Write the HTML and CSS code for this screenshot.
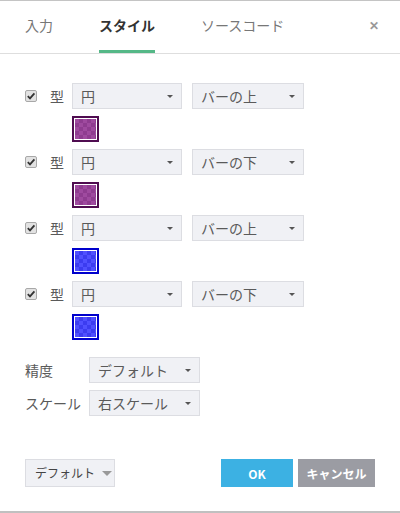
FILE: index.html
```html
<!DOCTYPE html>
<html lang="ja">
<head>
    <meta charset="UTF-8">
    <meta name="viewport" content="width=device-width, initial-scale=1.0">
    <title>スタイル</title>
    <link rel="stylesheet" href="styles.css">
</head>
<body>
    <div class="dialog">
        <div class="tabs">
            <div class="tab">入力</div>
            <div class="tab active">スタイル</div>
            <div class="tab">ソースコード</div>
            <div class="close">&#x2715;</div>
        </div>

        <div class="content">
            <div class="plot">
                <div class="row">
                    <span class="check"><svg width="12" height="12" viewBox="0 0 12 12"><rect x="0.5" y="0.5" width="11" height="11" rx="1.5" fill="#e2e2e2" stroke="#a8a8a8"/><path d="M2.8 6.2 L5 8.4 L9.4 3.4" fill="none" stroke="#333" stroke-width="1.8"/></svg></span>
                    <span class="label">型</span>
                    <div class="select wide">円</div>
                    <div class="select wide2">バーの上</div>
                </div>
                <div class="swatch purple"></div>
            </div>
            <div class="plot">
                <div class="row">
                    <span class="check"><svg width="12" height="12" viewBox="0 0 12 12"><rect x="0.5" y="0.5" width="11" height="11" rx="1.5" fill="#e2e2e2" stroke="#a8a8a8"/><path d="M2.8 6.2 L5 8.4 L9.4 3.4" fill="none" stroke="#333" stroke-width="1.8"/></svg></span>
                    <span class="label">型</span>
                    <div class="select wide">円</div>
                    <div class="select wide2">バーの下</div>
                </div>
                <div class="swatch purple"></div>
            </div>
            <div class="plot">
                <div class="row">
                    <span class="check"><svg width="12" height="12" viewBox="0 0 12 12"><rect x="0.5" y="0.5" width="11" height="11" rx="1.5" fill="#e2e2e2" stroke="#a8a8a8"/><path d="M2.8 6.2 L5 8.4 L9.4 3.4" fill="none" stroke="#333" stroke-width="1.8"/></svg></span>
                    <span class="label">型</span>
                    <div class="select wide">円</div>
                    <div class="select wide2">バーの上</div>
                </div>
                <div class="swatch blue"></div>
            </div>
            <div class="plot">
                <div class="row">
                    <span class="check"><svg width="12" height="12" viewBox="0 0 12 12"><rect x="0.5" y="0.5" width="11" height="11" rx="1.5" fill="#e2e2e2" stroke="#a8a8a8"/><path d="M2.8 6.2 L5 8.4 L9.4 3.4" fill="none" stroke="#333" stroke-width="1.8"/></svg></span>
                    <span class="label">型</span>
                    <div class="select wide">円</div>
                    <div class="select wide2">バーの下</div>
                </div>
                <div class="swatch blue"></div>
            </div>

            <div class="options">
                <div class="row">
                    <span class="opt-label">精度</span>
                    <div class="select opt">デフォルト</div>
                </div>
                <div class="row">
                    <span class="opt-label">スケール</span>
                    <div class="select opt">右スケール</div>
                </div>
            </div>
        </div>

        <div class="footer">
            <div class="defaults">デフォルト<span class="caret"></span></div>
            <div class="buttons">
                <button class="btn ok">OK</button>
                <button class="btn cancel">キャンセル</button>
            </div>
        </div>
    </div>
</body>
</html>
```

FILE: styles.css
```css
body {
    margin: 0;
    font-family: "Noto Sans CJK JP", "Noto Sans", sans-serif;
    color: #5a5a5a;
    background: #fff;
}
.dialog {
    width: 400px;
    height: 513px;
    box-sizing: border-box;
    border-top: 1px solid #c4c4c4;
    border-bottom: 2px solid #c0c0c0;
    display: flex;
    flex-direction: column;
}
.tabs {
    height: 52px;
    border-bottom: 1px solid #dedede;
    display: flex;
    padding-left: 25px;
    padding-right: 21px;
}
.tab {
    font-size: 14px;
    color: #777;
    line-height: 49px;
    height: 49px;
    margin-right: 46px;
    border-bottom: 3px solid transparent;
}
.tab.active {
    color: #333;
    font-weight: bold;
    border-bottom-color: #55b887;
}
.close {
    margin-left: auto;
    font-size: 12px;
    color: #999;
    line-height: 48px;
    font-weight: bold;
}
.content {
    padding: 29px 25px 0;
}
.row {
    display: flex;
    align-items: center;
    height: 26px;
}
.check {
    width: 12px;
    height: 12px;
    display: flex;
    margin-right: 13px;
}
.label {
    font-size: 14px;
    width: 22px;
}
.select {
    height: 26px;
    box-sizing: border-box;
    background: #f0f1f5;
    border: 1px solid #dcdde2;
    font-size: 14px;
    color: #5a5a5a;
    line-height: 24px;
    padding-left: 8px;
    position: relative;
}
.select::after {
    content: "";
    position: absolute;
    right: 8px;
    top: 11px;
    border-left: 3px solid transparent;
    border-right: 3px solid transparent;
    border-top: 3px solid #555;
}
.select.wide {
    width: 110px;
    margin-right: 10px;
}
.select.wide2 {
    width: 112px;
}
.swatch {
    width: 27px;
    height: 26px;
    box-sizing: border-box;
    margin: 7px 0 7px 47px;
    border: 2px solid;
    box-shadow: inset 0 0 0 1px #fff;
    background-size: 8px 8px;
}
.swatch.purple {
    border-color: #4f0c50;
    background-color: #9f4a9f;
    background-image: linear-gradient(45deg, #8f3c90 25%, transparent 25%, transparent 75%, #8f3c90 75%),
        linear-gradient(45deg, #8f3c90 25%, transparent 25%, transparent 75%, #8f3c90 75%);
    background-position: 1px 1px, 5px 5px;
}
.swatch.blue {
    border-color: #0000cc;
    background-color: #5050ff;
    background-image: linear-gradient(45deg, #3c3cf0 25%, transparent 25%, transparent 75%, #3c3cf0 75%),
        linear-gradient(45deg, #3c3cf0 25%, transparent 25%, transparent 75%, #3c3cf0 75%);
    background-position: 1px 1px, 5px 5px;
}
.options {
    margin-top: 17px;
    display: flex;
    flex-direction: column;
    gap: 7px;
}
.opt-label {
    font-size: 14px;
    width: 64px;
}
.select.opt {
    width: 111px;
}
.footer {
    margin-top: auto;
    margin-bottom: 24px;
    padding: 0 25px;
    display: flex;
    justify-content: space-between;
}
.defaults {
    width: 90px;
    height: 28px;
    box-sizing: border-box;
    background: #f0f1f5;
    border: 1px solid #dcdde2;
    font-size: 12px;
    color: #444;
    line-height: 26px;
    padding-left: 9px;
    display: flex;
    align-items: center;
}
.caret {
    margin-left: 7px;
    border-left: 5px solid transparent;
    border-right: 5px solid transparent;
    border-top: 5px solid #999;
}
.buttons {
    display: flex;
    gap: 5px;
}
.btn {
    height: 28px;
    border: none;
    color: #fff;
    font-family: inherit;
    font-size: 12px;
    font-weight: bold;
    padding: 0;
    cursor: pointer;
}
.ok {
    width: 72px;
    background: #3cb1e3;
}
.cancel {
    width: 77px;
    background: #9b9ca3;
}
```
